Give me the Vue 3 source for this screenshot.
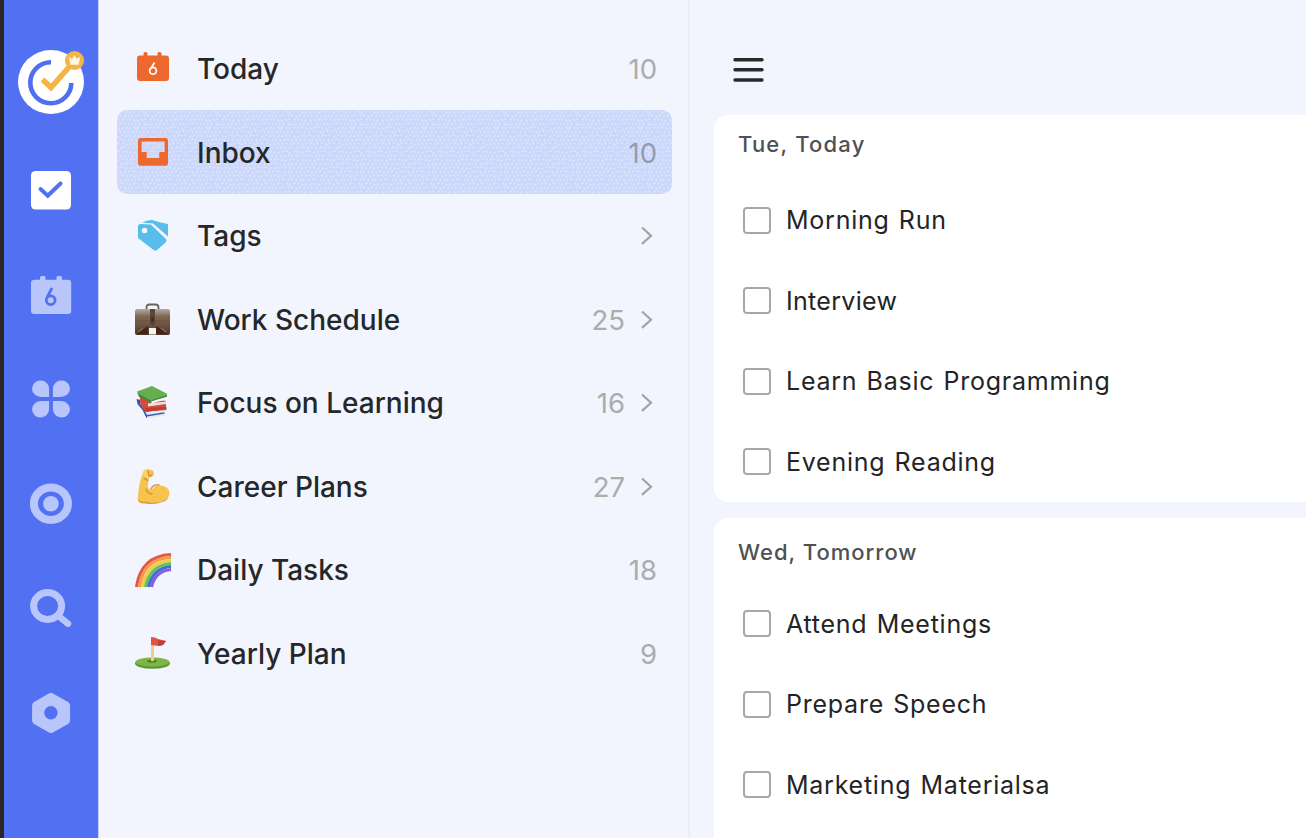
<script setup>
const lists = [
  { icon: 'today', name: 'Today', count: 10 },
  { icon: 'inbox', name: 'Inbox', count: 10, active: true },
  { icon: 'tags', name: 'Tags', arrow: true },
  { icon: 'work', name: 'Work Schedule', count: 25, arrow: true },
  { icon: 'books', name: 'Focus on Learning', count: 16, arrow: true },
  { icon: 'career', name: 'Career Plans', count: 27, arrow: true },
  { icon: 'rainbow', name: 'Daily Tasks', count: 18 },
  { icon: 'golf', name: 'Yearly Plan', count: 9 },
]
const groups = [
  { title: 'Tue, Today', tasks: ['Morning Run', 'Interview', 'Learn Basic Programming', 'Evening Reading'] },
  { title: 'Wed, Tomorrow', tasks: ['Attend Meetings', 'Prepare Speech', 'Marketing Materialsa'] },
]

// Jittered grid of light specks for the selected row's texture.
const specks = []
let seed = 7
const rand = () => (seed = (seed * 16807) % 2147483647) / 2147483647
for (let r = 0; r < 18; r++) {
  for (let c = 0; c < 18; c++) {
    specks.push({ x: c * 4 + (r % 2) * 2 + rand() * 1.6 + 0.4, y: r * 4 + 1 + rand() * 1.6 })
  }
}
</script>

<template>
  <div class="app">
    <nav class="rail">
      <svg class="logo" viewBox="0 0 72 72">
        <ellipse cx="36" cy="38" rx="33" ry="32" fill="#fff" />
        <path d="M36 18.300A20.500 20.500 0 1 0 56.300 39" fill="none" stroke="#4f6ff0" stroke-width="4.600" />
        <path d="M27.500 35.500l8.500 8L55 22" fill="none" stroke="#f3b545" stroke-width="5.600" />
        <circle cx="59.500" cy="16.500" r="9.600" fill="#f3b545" />
        <path d="M53.800 13l3.400 1.800 2.300-3.600 2.300 3.600 3.400-1.800-1.500 7.800h-8.400z" fill="#fff6dd" />
      </svg>
      <svg viewBox="0 0 44 44">
        <rect x="2" y="3" width="40" height="38.500" rx="4.500" fill="#fff" />
        <path d="M11.500 21l7.300 6.700L31.500 15.500" fill="none" stroke="#5271f2" stroke-width="4" stroke-linecap="round" />
      </svg>
      <svg viewBox="0 0 44 44">
        <path d="M6 6.800h5V4.500q0-1.500 1.500-1.500h2.500q1.500 0 1.500 1.500v2.300h11V4.500q0-1.500 1.500-1.500h2.500q1.500 0 1.500 1.500v2.300H39q3.200 0 3.200 3.200v27.800q0 3.200-3.200 3.200H5.200Q2 41 2 37.800V10q0-3.200 4-3.200z" fill="#b8c6fb" />
        <path d="M23 15l-5 9.500" fill="none" stroke="#5271f2" stroke-width="2.800" />
        <circle cx="21.700" cy="27.200" r="4.400" fill="none" stroke="#5271f2" stroke-width="2.800" />
      </svg>
      <svg viewBox="0 0 44 44" fill="#b8c6fb">
        <path d="M11.800 3.500a8.300 8.300 0 0 1 8.300 8.300v8.200h-7.800a9.300 8.300 0 0 1-9.300-8.300 8.500 8.200 0 0 1 8.800-8.200z" />
        <path d="M32.200 3.500a8.300 8.300 0 0 0-8.300 8.300v8.200h7.800a9.300 8.300 0 0 0 9.300-8.300 8.500 8.200 0 0 0-8.800-8.200z" />
        <path d="M11.800 40.500a8.300 8.300 0 0 0 8.300-8.300v-8.200h-7.800a9.300 8.300 0 0 0-9.300 8.300 8.500 8.200 0 0 0 8.800 8.200z" />
        <path d="M32.200 40.500a8.300 8.300 0 0 1-8.300-8.300v-8.200h7.800a9.300 8.300 0 0 1 9.300 8.300 8.500 8.200 0 0 1-8.800 8.200z" />
      </svg>
      <svg viewBox="0 0 44 44">
        <ellipse cx="21.900" cy="21.700" rx="17" ry="16.200" fill="none" stroke="#b8c6fb" stroke-width="8" />
        <circle cx="21.900" cy="21.700" r="7.800" fill="#b8c6fb" />
      </svg>
      <svg viewBox="0 0 44 44" fill="none" stroke="#b8c6fb">
        <ellipse cx="18.600" cy="20" rx="14" ry="13.400" stroke-width="7" />
        <path d="M29 29.600l10 8.200" stroke-width="6.500" stroke-linecap="round" />
      </svg>
      <svg viewBox="0 0 44 44">
        <path d="M19.900 2.400q2-1.200 4 0L39.100 11q2 1.200 2 3.500v15q0 2.200-2 3.400L23.900 41.500q-2 1.200-4 0L5.100 32.900q-2-1.200-2-3.400v-15q0-2.300 2-3.500z" fill="#b8c6fb" />
        <circle cx="21.900" cy="21.800" r="6.700" fill="#5271f2" />
      </svg>
    </nav>

    <aside class="sidebar">
      <div v-for="l in lists" :key="l.name" class="row" :class="{ active: l.active }">
        <svg v-if="l.active" class="texture">
          <defs>
            <pattern id="specks" width="72" height="72" patternUnits="userSpaceOnUse">
              <circle v-for="(s, i) in specks" :key="i" :cx="s.x" :cy="s.y" r="0.85" fill="#e3e9f8" />
            </pattern>
          </defs>
          <rect width="100%" height="100%" fill="url(#specks)" />
        </svg>
        <svg v-if="l.icon === 'today'" class="icon" viewBox="0 0 40 40">
          <path d="M7 6.500h3.500V4.500q0-1.500 1.500-1.500h1q1.500 0 1.500 1.500v2h10v-2q0-1.500 1.500-1.500h1q1.500 0 1.500 1.500v2H33q3 0 3 3V29q0 3-3 3H7q-3 0-3-3V9.500q0-3 3-3z" fill="#ed682e" />
          <path d="M21.500 13.500l-4.300 7" fill="none" stroke="#fff" stroke-width="1.700" />
          <circle cx="20" cy="21.700" r="3.400" fill="none" stroke="#fff" stroke-width="1.700" />
        </svg>
        <svg v-else-if="l.icon === 'inbox'" class="icon" viewBox="0 0 40 40">
          <path fill-rule="evenodd" d="M7.500 5h25q2.500 0 2.500 2.500v22.700q0 2.500-2.500 2.500h-25Q5 32.700 5 30.200V7.500Q5 5 7.500 5zM8.600 8.600v10.300h5.100v6.200h12.600v-6.200h5.300V8.600z" fill="#ed682e" />
        </svg>
        <svg v-else-if="l.icon === 'tags'" class="icon" viewBox="0 0 40 40">
          <path d="M9 6.500Q15 3.500 19 4l9 2.500 7 1.500v12.500L20 7.500z" fill="#58bde9" />
          <path d="M5 10.500Q5 8 7.500 8L18 8.500l14.500 14q2 2 0 4L24 34q-2 1.500-4-.5L5 22z" fill="#58bde9" />
          <path d="M18.500 8L34 22.500" stroke="#f2f5fd" stroke-width="1.600" />
          <circle cx="11.500" cy="14.500" r="2.800" fill="#f4f8ff" />
        </svg>
        <svg v-else-if="l.icon === 'work'" class="icon" viewBox="0 0 40 40">
          <defs>
            <linearGradient id="leather" x2="0" y2="1">
              <stop offset="0" stop-color="#b3aca6" /><stop offset=".28" stop-color="#806754" /><stop offset=".6" stop-color="#6b5441" /><stop offset="1" stop-color="#4a352a" />
            </linearGradient>
          </defs>
          <path d="M13.500 9.500V7.500q0-3 3-3h6q3 0 3 3v2" fill="none" stroke="#6b625b" stroke-width="1.800" />
          <path d="M4 9h31q2 0 2 2v22q0 2-2 2H4q-2 0-2-2V11q0-2 2-2z" fill="url(#leather)" />
          <path d="M2 20h35v1.500H2z" fill="#705542" />
          <path d="M17 9h5v15l-2.500 2-2.500-2z" fill="#5b4434" />
          <path d="M4 34l11-8v8zm31 0l-12-8v8z" fill="#4c1f18" />
          <path d="M5 32l5-4m23 4l-5-4" stroke="#826b54" stroke-width="1.500" />
          <path d="M16 28h7v6.500h-7z" fill="#f2f3ed" /><path d="M18.200 17h2.600v5h-2.600z" fill="#3e2d25" />
        </svg>
        <svg v-else-if="l.icon === 'books'" class="icon" viewBox="0 0 40 40">
          <path d="M3.500 16l4 1v5l22 3 4-1v3l-4 1 3 3-19 4-4-8-5-6z" fill="#3456ae" />
          <path d="M12 28.500l21-2v2.500l-19 3zm2 5l18-3v2l-18 3z" fill="#e4e9ed" />
          <path d="M7 14l26 4v9l-21 1.500Q6 22 7 14z" fill="#d8493c" />
          <path d="M15 20.500l18-2v2.500l-18 2.500z" fill="#e7e2dc" /><path d="M12 25l20-1 1 2-20 3z" fill="#c23c35" />
          <path d="M4 8.500L19 3l15.500 8L18 18.500 5 12z" fill="#68ad50" />
          <path d="M5 10.500l13 7 16-6v4l-16 4.500L6 14z" fill="#448540" />
          <path d="M18 18.500l16.500-5v2.500L19 20.500z" fill="#f7f8f5" />
        </svg>
        <svg v-else-if="l.icon === 'career'" class="icon" viewBox="0 0 40 40">
          <path d="M10.500 4q2-2.500 6-1.500 4.500.5 4.500 4-1 4-5 4.500l-1.500 9q2 4 5 2 2-4 8-3.500 8 1 9 7 0 7-8 8.500-7 3-16 1-8 1-7.500-3Q5 18 10.500 4z" fill="#f6c34c" />
          <path d="M4.500 31q1.500 4.500 8 3.500 8 2 15 0 5-1 8-4-2 4-8 5-7 2.500-15 1-8 .5-8-5.500z" fill="#e19b33" />
          <path d="M11 4q2-1 4 0 0 4 3 5l-2 2.500q-5-1-7-3z" fill="#f9d269" />
          <path d="M15 4l1 5 3-1m-8 3q3 3 4 2m-2 9q2 5 6 5m-1-5q2-5 8-4" fill="none" stroke="#dc8a38" stroke-width="1.300" stroke-linecap="round" />
        </svg>
        <svg v-else-if="l.icon === 'rainbow'" class="icon" viewBox="0 0 40 40" fill="none" stroke-width="3.250">
          <path d="M3.500 37Q8 6 38 4.500" stroke="#e75749" />
          <path d="M6.500 37Q10 9 38 7.500" stroke="#f2a044" />
          <path d="M9.500 37Q14 12 38 10.500" stroke="#f4cb50" />
          <path d="M12.500 37Q17 15 38 13.500" stroke="#62c553" />
          <path d="M15.500 37Q20 18 38 16.500" stroke="#466cdd" />
          <path d="M18.500 37Q22 21 38 19.500" stroke="#8164db" />
        </svg>
        <svg v-else class="icon" viewBox="0 0 40 40">
          <ellipse cx="19.500" cy="29.500" rx="17.500" ry="5.300" fill="#5d9635" />
          <ellipse cx="19.500" cy="28" rx="17" ry="4.500" fill="#7cb744" />
          <ellipse cx="19" cy="27" rx="5" ry="1.600" fill="#4f7f31" />
          <path d="M18 4h3v23h-3z" fill="#f3cc87" />
          <path d="M18 3q4 0 7 2l8 2-3 4-4.500 1-7.500-1z" fill="#dd5348" />
          <path d="M25 6l8 1-3 4-5 1z" fill="#b8433d" />
        </svg>
        <span class="name">{{ l.name }}</span>
        <span class="count">{{ l.count }}</span>
        <svg v-if="l.arrow" class="arrow" viewBox="0 0 16 22">
          <path d="M3 2.500l9 8.200L3 18.900" fill="none" stroke="#a2a3a5" stroke-width="2.200" />
        </svg>
      </div>
    </aside>

    <main class="main">
      <svg class="menu" viewBox="0 0 32 28" stroke="#292929" stroke-width="3.400" stroke-linecap="round">
        <path d="M3 3.700h27M3 13.700h27M3 24h27" />
      </svg>
      <section v-for="g in groups" :key="g.title" class="card">
        <h2>{{ g.title }}</h2>
        <label v-for="t in g.tasks" :key="t" class="task">
          <span class="box"></span><span class="text" :class="{ tight: t === 'Interview' }">{{ t }}</span>
        </label>
      </section>
    </main>
  </div>
</template>

<style>
body { margin: 0; background: #f2f5fd; overflow: hidden; }
</style>
<style scoped>
.app { display: flex; box-sizing: border-box; width: 1306px; height: 838px; overflow: hidden; background: #f2f5fd; font-family: Inter, "Liberation Sans", sans-serif; }
svg { display: block; flex: none; }
.rail { box-sizing: border-box; flex: none; width: 98px; height: 838px; border-left: 4px solid #272727; background: #5271f2; display: flex; flex-direction: column; align-items: center; padding: 44px 0 0; box-shadow: 1px 0 #c5d0fa; }
.rail svg { width: 44px; height: 44px; margin-bottom: 60.500px; }
.rail .logo { width: 72px; height: 72px; margin-bottom: 52px; }
.sidebar { box-sizing: border-box; flex: none; width: 592px; padding: 26.500px 16px 0 19px; border-right: 2px solid #e9edf6; }
.row { position: relative; box-sizing: border-box; height: 83.500px; padding: 2px 15px 0 16px; display: flex; align-items: center; border-radius: 10px; overflow: hidden; }
.row.active { background: #ccd8fb; }
.texture { position: absolute; inset: 0; width: 100%; height: 100%; }
.row > :not(.texture) { position: relative; }
.icon { width: 40px; height: 40px; margin-right: 24px; }
.name { flex: 1; font-size: 28px; font-weight: 500; line-height: 36px; color: #252729; white-space: nowrap; }
.count { font-size: 27.500px; line-height: 36px; color: #abacae; }
.active .count { color: #929caf; }
.arrow { width: 16px; height: 22px; margin: 0 2px 0 14px; }
.main { flex: 1; min-width: 0; padding: 55.500px 0 0 24px; }
.menu { width: 32px; height: 28px; margin: 0 0 31px 18px; }
.card { box-sizing: border-box; height: 387px; margin-bottom: 16.500px; padding: 14px 0 0 24px; background: #fff; border-radius: 14px 0 0 14px; }
.card h2 { margin: 0 0 21.500px; font-size: 22px; font-weight: 500; line-height: 30px; letter-spacing: 1.200px; color: #505153; }
.card + .card { padding-top: 19px; }
.card + .card h2 { margin-bottom: 16.500px; letter-spacing: 1px; }
.task { display: flex; align-items: center; height: 80.500px; padding-left: 5px; }
.box { box-sizing: border-box; width: 28px; height: 27px; border: 2px solid #a7a7a7; border-radius: 4px; margin-right: 15px; }
.text { font-size: 25px; line-height: 36px; letter-spacing: .75px; word-spacing: 1.500px; color: #242426; white-space: nowrap; }
.tight { letter-spacing: .3px; }
</style>
